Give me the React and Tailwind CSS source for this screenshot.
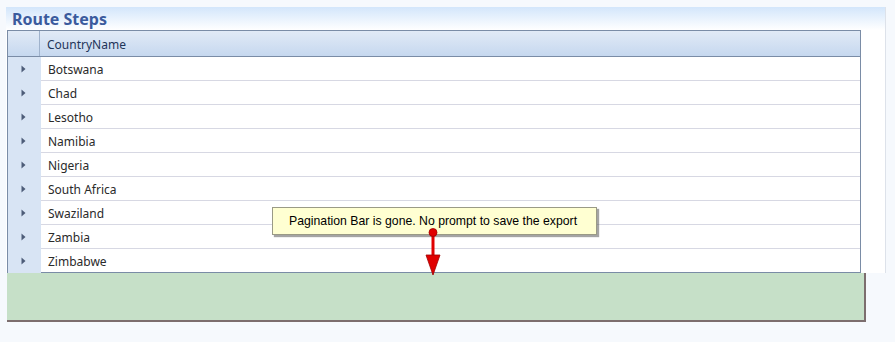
const countries = [
  "Botswana",
  "Chad",
  "Lesotho",
  "Namibia",
  "Nigeria",
  "South Africa",
  "Swaziland",
  "Zambia",
  "Zimbabwe",
];

function RowArrow() {
  return (
    <svg width="5" height="8" viewBox="0 0 5 8" className="block">
      <path d="M0.5 0.5 L4.5 4 L0.5 7.5 Z" fill="#4d5c78" />
    </svg>
  );
}

function Callout() {
  return (
    <>
      <div className="absolute left-[266px] top-[200px] w-[325px] h-[28px] bg-[#ffffd2] border border-[#9a9a86] shadow-[2px_2px_1px_rgba(90,90,90,0.55)] flex items-center pl-[16px] font-['Liberation_Sans',Arial,sans-serif] text-[12.25px] text-black">
        Pagination Bar is gone. No prompt to save the export
      </div>
      <svg
        className="absolute left-[419px] top-[221px]"
        width="18"
        height="48"
        viewBox="0 0 18 48"
      >
        <line x1="8" y1="4" x2="8" y2="30" stroke="#e00000" strokeWidth="3" />
        <circle cx="8" cy="4.5" r="4" fill="#e00000" stroke="#a00000" strokeWidth="0.8" />
        <path d="M1 27 L15 27 L8 47 Z" fill="#e00000" stroke="#a00000" strokeWidth="0.8" />
      </svg>
    </>
  );
}

export default function App() {
  return (
    <div className="w-[895px] h-[342px] bg-[#f6f9fd] pt-[7px] pl-[6px] font-['Noto_Sans',sans-serif]">
      <div className="relative w-[880px] bg-white border-r border-[#dde2ea]">
        <div className="h-[23px] bg-gradient-to-b from-[#d3e6fb] to-white pl-[6px] flex items-center">
          <span className="text-[16px] font-bold text-[#3b5b9d] leading-none">
            Route Steps
          </span>
        </div>

        <div className="ml-[1px] w-[854px] border border-b-0 border-[#7a8ca6]">
          <div className="flex h-[26px] bg-gradient-to-b from-[#e1eaf6] to-[#c6d8ef] border-b border-[#7a8ca6]">
            <div className="w-[32px] border-r border-[#9fb2cc]" />
            <div className="flex-1 flex items-center pl-[7px] pt-[2px] text-[12px] text-[#1e3559]">
              CountryName
            </div>
          </div>

          {countries.map((name, i) => (
            <div key={name} className="flex h-[24px]">
              <div className="w-[33px] bg-[#d8e4f4] flex items-center pl-[13px]">
                <RowArrow />
              </div>
              <div
                className={
                  "flex-1 flex items-center pl-[7px] pt-[2px] text-[12px] text-[#2a2a2a] border-b " +
                  (i === countries.length - 1 ? "border-[#7a8ca6]" : "border-[#d7d8e3]")
                }
              >
                {name}
              </div>
            </div>
          ))}
        </div>

        <Callout />
      </div>

      <div className="ml-[1px] w-[859px] h-[49px] bg-[#c6e0c8] border-r-2 border-b-2 border-[#7c6e6e]" />
    </div>
  );
}
